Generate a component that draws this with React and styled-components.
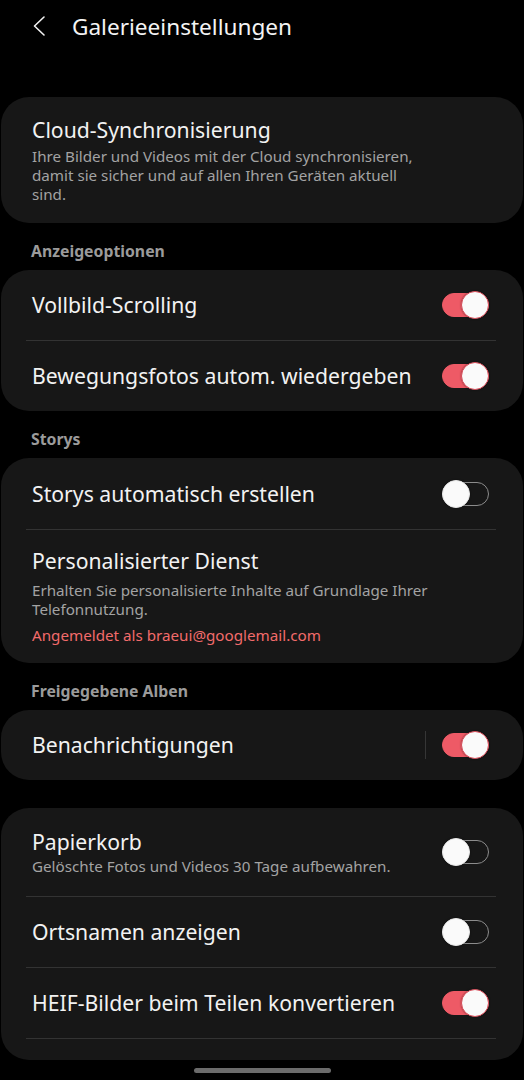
import React from 'react'
import styled, { createGlobalStyle } from 'styled-components'

const GlobalStyle = createGlobalStyle`
  html, body {
    margin: 0;
    padding: 0;
    background: #000;
  }
  body {
    font-family: "Noto Sans", "Open Sans", sans-serif;
    -webkit-font-smoothing: antialiased;
  }
`

const Page = styled.div`
  width: 524px;
  min-height: 1080px;
  background: #000;
  display: flex;
  flex-direction: column;
`

const Header = styled.header`
  height: 52px;
  display: flex;
  align-items: center;
  padding-left: 31px;
  gap: 23px;
`

const BackButton = styled.button`
  border: none;
  background: none;
  padding: 0;
  display: flex;
  align-items: center;
  cursor: pointer;
`

const HeaderTitle = styled.h1`
  margin: 0;
  font-size: 22.6px;
  font-weight: 400;
  color: #f4f4f4;
`

const Content = styled.main`
  display: flex;
  flex-direction: column;
  padding-top: 45px;
`

const Card = styled.section`
  background: #171717;
  border-radius: 28px;
  margin: 0 1px;
  margin-top: ${(p) => p.gap || 0}px;
  overflow: hidden;
`

const SectionLabel = styled.div`
  font-size: 15.8px;
  font-weight: 700;
  color: #9b9b9b;
  line-height: 20px;
  padding: 18px 31px 9px;
`

const Row = styled.div`
  display: flex;
  align-items: center;
  min-height: ${(p) => p.h || 70}px;
  padding: ${(p) => p.pad || '0 34px 0 31px'};
  box-sizing: border-box;
  gap: 12px;
`

const RowText = styled.div`
  flex: 1;
  display: flex;
  flex-direction: column;
  min-width: 0;
`

const Title = styled.div`
  font-size: 21.2px;
  line-height: 26px;
  color: #f2f2f2;
`

const Sub = styled.div`
  font-size: 15.2px;
  line-height: 19px;
  color: #a3a3a3;
  margin-top: ${(p) => p.mt || 0}px;
  padding-right: ${(p) => p.pr || 0}px;
`

const Account = styled.div`
  font-size: 15.2px;
  line-height: 19px;
  color: #f26b6b;
  margin-top: 7px;
`

const Divider = styled.div`
  height: 1px;
  background: #333;
  margin: 0 27px 0 25px;
`

const VDivider = styled.div`
  width: 1px;
  height: 28px;
  background: #363636;
  margin-right: 4px;
`

const SwitchWrap = styled.div`
  position: relative;
  width: 47px;
  height: 28px;
  flex-shrink: 0;
`

const Track = styled.div`
  position: absolute;
  left: 0;
  right: 0;
  top: 2px;
  height: 24px;
  border-radius: 12px;
  box-sizing: border-box;
  background: ${(p) => (p.on ? '#ee5a66' : 'transparent')};
  border: 1.5px solid ${(p) => (p.on ? '#ee5a66' : '#8c8c8c')};
`

const Thumb = styled.div`
  position: absolute;
  top: 0;
  ${(p) => (p.on ? 'right: 0;' : 'left: 0;')}
  width: 28px;
  height: 28px;
  border-radius: 50%;
  box-sizing: border-box;
  background: #fafafa;
  border: 1.5px solid ${(p) => (p.on ? '#d94a57' : '#e8e8e8')};
  box-shadow: 0 0 2px rgba(0, 0, 0, 0.4);
`

const HomeBar = styled.div`
  width: 137px;
  height: 5px;
  border-radius: 3px;
  background: #6b6b6b;
  margin: 8px auto 0;
`

const Switch = ({ on }) => (
  <SwitchWrap>
    <Track on={on ? 1 : 0} />
    <Thumb on={on ? 1 : 0} />
  </SwitchWrap>
)

const BackIcon = () => (
  <svg width="18" height="24" viewBox="0 0 18 24">
    <path d="M13 3 L3.5 12 L13 21" fill="none" stroke="#f2f2f2" strokeWidth="1.6" strokeLinecap="round" strokeLinejoin="round" />
  </svg>
)

export default function App() {
  return (
    <Page>
      <GlobalStyle />
      <Header>
        <BackButton aria-label="Zurück">
          <BackIcon />
        </BackButton>
        <HeaderTitle>Galerieeinstellungen</HeaderTitle>
      </Header>

      <Content>
        <Card>
          <Row pad="20px 34px 19px 31px">
            <RowText>
              <Title>Cloud-Synchronisierung</Title>
              <Sub mt={4} pr={70}>
                Ihre Bilder und Videos mit der Cloud synchronisieren, damit sie sicher und auf allen Ihren Geräten aktuell sind.
              </Sub>
            </RowText>
          </Row>
        </Card>

        <SectionLabel>Anzeigeoptionen</SectionLabel>
        <Card>
          <Row>
            <RowText><Title>Vollbild-Scrolling</Title></RowText>
            <Switch on />
          </Row>
          <Divider />
          <Row>
            <RowText><Title>Bewegungsfotos autom. wiedergeben</Title></RowText>
            <Switch on />
          </Row>
        </Card>

        <SectionLabel>Storys</SectionLabel>
        <Card>
          <Row h={71}>
            <RowText><Title>Storys automatisch erstellen</Title></RowText>
            <Switch />
          </Row>
          <Divider />
          <Row pad="18px 34px 18px 31px">
            <RowText>
              <Title>Personalisierter Dienst</Title>
              <Sub mt={7}>Erhalten Sie personalisierte Inhalte auf Grundlage Ihrer Telefonnutzung.</Sub>
              <Account>Angemeldet als braeui@googlemail.com</Account>
            </RowText>
          </Row>
        </Card>

        <SectionLabel>Freigegebene Alben</SectionLabel>
        <Card>
          <Row>
            <RowText><Title>Benachrichtigungen</Title></RowText>
            <VDivider />
            <Switch on />
          </Row>
        </Card>

        <Card gap={28}>
          <Row h={88} pad="20px 34px 20px 31px">
            <RowText>
              <Title>Papierkorb</Title>
              <Sub mt={2}>Gelöschte Fotos und Videos 30 Tage aufbewahren.</Sub>
            </RowText>
            <Switch />
          </Row>
          <Divider />
          <Row>
            <RowText><Title>Ortsnamen anzeigen</Title></RowText>
            <Switch />
          </Row>
          <Divider />
          <Row>
            <RowText><Title>HEIF-Bilder beim Teilen konvertieren</Title></RowText>
            <Switch on />
          </Row>
          <Divider />
          <Row h={21} />
        </Card>
        <HomeBar />
      </Content>
    </Page>
  )
}
